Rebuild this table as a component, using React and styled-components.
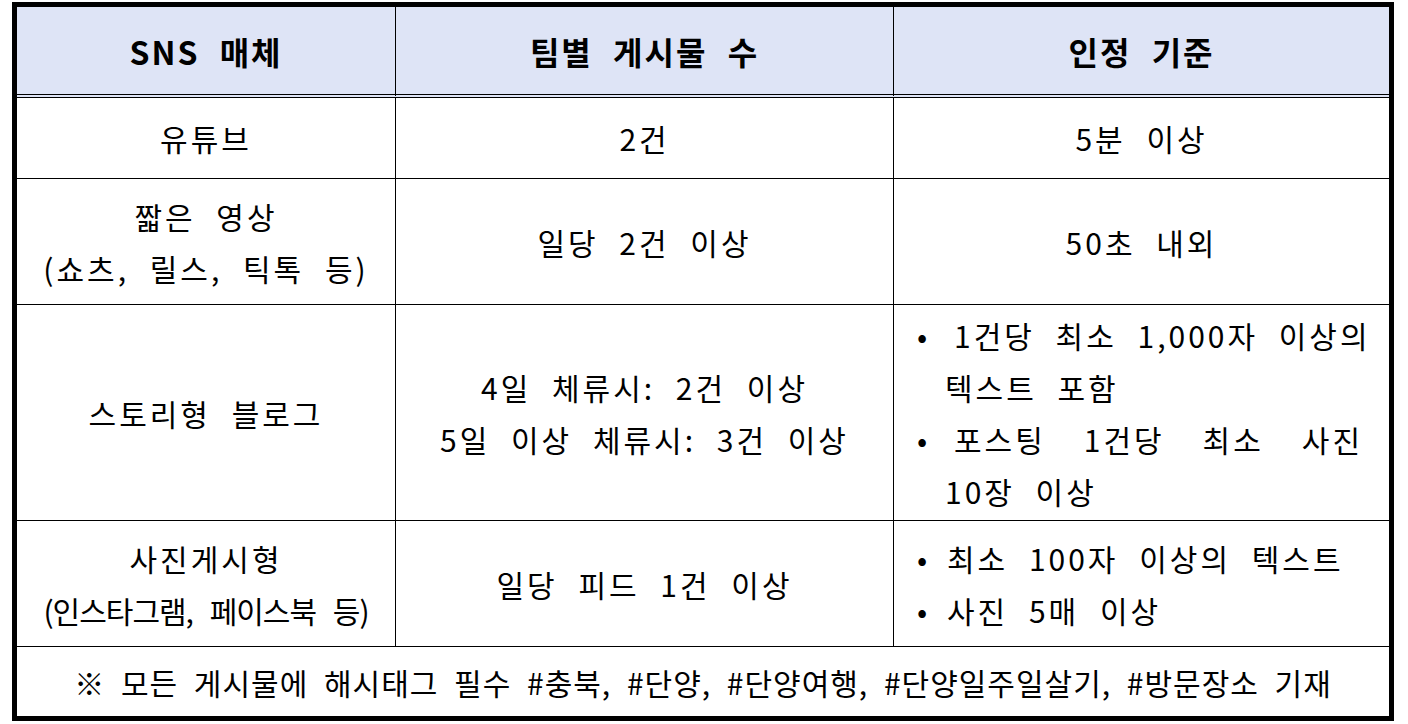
import React from "react";
import styled, { createGlobalStyle } from "styled-components";

const GlobalStyle = createGlobalStyle`
  html, body {
    margin: 0;
    padding: 0;
    background: #ffffff;
  }
  body {
    font-family: "Noto Sans CJK KR", "Noto Sans", sans-serif;
    color: #000000;
  }
`;

const Page = styled.div`
  padding: 2px 0 0 12px;
`;

const Grid = styled.div`
  display: grid;
  grid-template-columns: 379px 498px 495px;
  grid-template-rows: 91px 81px 126px 216px 126px 69px;
  width: 1372px;
  border: 5px solid #000000;
`;

const HeadCell = styled.div`
  display: flex;
  align-items: center;
  justify-content: center;
  box-sizing: border-box;
  background: #dee4f6;
  border-bottom: 4px double #000000;
  border-right: ${(p) => (p.$last ? "none" : "1px solid #000000")};
  font-size: 32px;
  font-weight: 700;
  letter-spacing: 2px;
  word-spacing: 11px;
`;

const Cell = styled.div`
  display: flex;
  flex-direction: column;
  align-items: ${(p) => (p.$left ? "stretch" : "center")};
  justify-content: center;
  box-sizing: border-box;
  border-bottom: 1px solid #000000;
  border-right: ${(p) => (p.$last ? "none" : "1px solid #000000")};
  padding: ${(p) => (p.$left ? "0 26px 0 23px" : "0")};
  font-size: 30px;
  line-height: 52px;
  letter-spacing: 3px;
  word-spacing: 11px;
  text-align: center;
`;

const Line = styled.div`
  white-space: nowrap;
  letter-spacing: ${(p) => p.$tight || "inherit"};
`;

const FootCell = styled.div`
  grid-column: 1 / span 3;
  display: flex;
  align-items: center;
  justify-content: center;
  font-size: 30px;
  letter-spacing: 1px;
  word-spacing: 8px;
`;

const Item = styled.div`
  display: grid;
  grid-template-columns: 28px 1fr;
  text-align: left;
`;

const Bullet = styled.span`
  font-size: 30px;
  letter-spacing: 0;
`;

const JustLine = styled.div`
  text-align: justify;
  text-align-last: justify;
  white-space: nowrap;
  padding-left: ${(p) => p.$indent || "0"};
`;

const PlainLine = styled.div`
  white-space: nowrap;
  padding-left: ${(p) => p.$indent || "0"};
`;

function Bulleted({ first, rest, indent }) {
  return (
    <Item>
      <Bullet>•</Bullet>
      <div>
        {rest ? (
          <JustLine $indent={indent}>{first}</JustLine>
        ) : (
          <PlainLine $indent={indent}>{first}</PlainLine>
        )}
        {rest && <PlainLine>{rest}</PlainLine>}
      </div>
    </Item>
  );
}

export default function App() {
  return (
    <Page>
      <GlobalStyle />
      <Grid>
        <HeadCell>SNS 매체</HeadCell>
        <HeadCell>팀별 게시물 수</HeadCell>
        <HeadCell $last>인정 기준</HeadCell>

        <Cell>유튜브</Cell>
        <Cell>2건</Cell>
        <Cell $last>5분 이상</Cell>

        <Cell>
          <Line>짧은 영상</Line>
          <Line>(쇼츠, 릴스, 틱톡 등)</Line>
        </Cell>
        <Cell>일당 2건 이상</Cell>
        <Cell $last>50초 내외</Cell>

        <Cell>스토리형 블로그</Cell>
        <Cell>
          <Line>4일 체류시: 2건 이상</Line>
          <Line>5일 이상 체류시: 3건 이상</Line>
        </Cell>
        <Cell $last $left>
          <Bulleted first="1건당 최소 1,000자 이상의" rest="텍스트 포함" indent="9px" />
          <Bulleted first="포스팅 1건당 최소 사진" rest="10장 이상" indent="9px" />
        </Cell>

        <Cell>
          <Line>사진게시형</Line>
          <Line $tight="-1px">(인스타그램, 페이스북 등)</Line>
        </Cell>
        <Cell>일당 피드 1건 이상</Cell>
        <Cell $last $left>
          <Bulleted first="최소 100자 이상의 텍스트" indent="2px" />
          <Bulleted first="사진 5매 이상" indent="2px" />
        </Cell>

        <FootCell>
          ※ 모든 게시물에 해시태그 필수 #충북, #단양, #단양여행, #단양일주일살기, #방문장소 기재
        </FootCell>
      </Grid>
    </Page>
  );
}
